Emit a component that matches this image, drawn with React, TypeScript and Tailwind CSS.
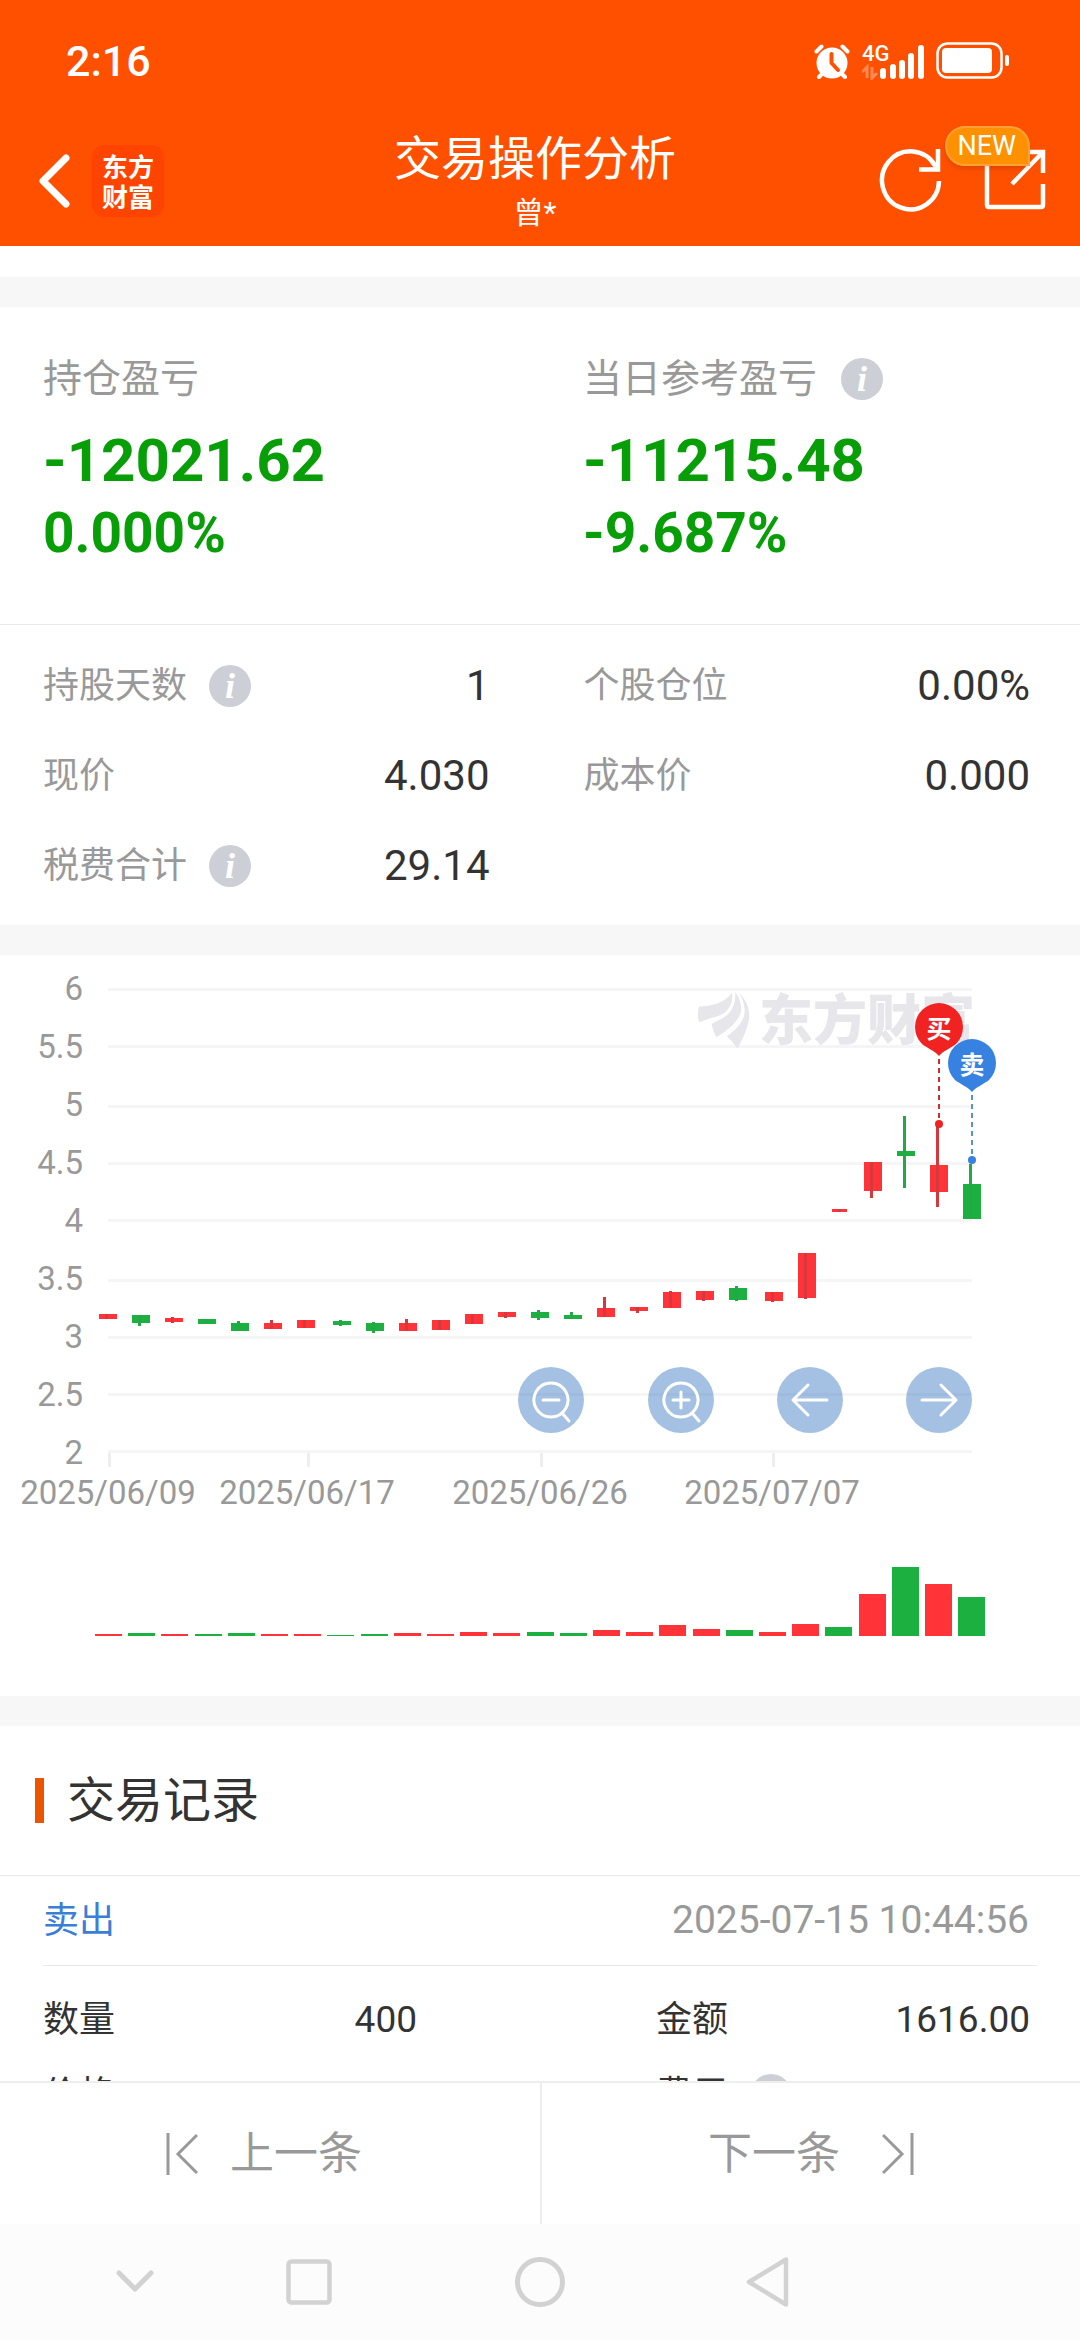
import React from 'react';

interface ICandle {
  x: number;
  up: boolean;
  top: number;
  bottom: number;
  high: number;
  low: number;
  volume: number;
}

interface FieldProps {
  label: string;
  value?: string;
  info?: boolean;
}

const RED = '#ff3338';
const GREEN = '#1bb040';

// x, up, body top, body bottom, high, low, volume (all in chart units)
const rawCandles: [number, boolean, number, number, number, number, number][] = [
  [99, true, 359, 364, 359, 364, 2],
  [132, false, 360, 368, 360, 371, 3],
  [165, true, 363, 367, 362, 368, 2],
  [198, false, 364, 369, 364, 369, 2],
  [231, false, 368, 376, 366, 376, 3],
  [264, true, 368, 374, 365, 374, 2],
  [297, true, 365, 373, 365, 373, 2],
  [333, false, 366, 370, 365, 371, 1],
  [366, false, 368, 376, 367, 378, 2],
  [399, true, 368, 376, 364, 376, 3],
  [432, true, 365, 375, 365, 375, 2],
  [465, true, 359, 369, 359, 369, 4],
  [498, true, 357, 362, 357, 363, 3],
  [531, false, 357, 363, 355, 365, 4],
  [564, false, 360, 364, 357, 364, 3],
  [597, true, 353, 362, 342, 362, 6],
  [630, true, 352, 356, 352, 358, 4],
  [663, true, 337, 353, 336, 353, 11],
  [696, true, 336, 345, 336, 346, 7],
  [729, false, 333, 345, 331, 346, 6],
  [765, true, 337, 346, 337, 347, 4],
  [798, true, 298, 343, 298, 344, 12],
  [832, true, 254, 257, 254, 257, 9],
  [864, true, 207, 236, 207, 243, 42],
  [897, false, 196, 201, 161, 233, 69],
  [930, true, 210, 237, 172, 252, 52],
  [963, false, 229, 264, 209, 264, 39],
];

const candles: ICandle[] = rawCandles.map(([x, up, top, bottom, high, low, volume]) => ({
  x, up, top, bottom, high, low, volume,
}));

// day that opened at the limit: flat candle, volume counted as selling
const LIMIT_DAY = 22;

const gridLines = [
  { label: '6', y: 33, base: 45 },
  { label: '5.5', y: 90, base: 103 },
  { label: '5', y: 150, base: 161 },
  { label: '4.5', y: 207, base: 219 },
  { label: '4', y: 264, base: 277 },
  { label: '3.5', y: 324, base: 335 },
  { label: '3', y: 381, base: 393 },
  { label: '2.5', y: 438, base: 451 },
  { label: '2', y: 495, base: 509 },
];

const dates = [
  { label: '2025/06/09', x: 108 },
  { label: '2025/06/17', x: 307 },
  { label: '2025/06/26', x: 540 },
  { label: '2025/07/07', x: 772 },
];

function InfoButton() {
  return (
    <button
      aria-label="说明"
      className="flex h-[42px] w-[42px] shrink-0 items-center justify-center rounded-full bg-[#ccd0d6] font-['Liberation_Serif',serif] text-4xl leading-none font-bold text-white italic"
    >
      i
    </button>
  );
}

function StatusBar() {
  return (
    <div className="flex h-[116px] items-center justify-between pt-1.5 pr-[70px] pl-[66px] text-white">
      <span className="text-[43px] leading-none font-medium">2:16</span>
      <div className="flex items-center gap-3">
        <svg width="36" height="36" viewBox="0 0 36 36" aria-label="闹钟">
          <circle cx="18" cy="20" r="15.5" fill="#fff" />
          <path d="M2.5 8.5 7.5 3.5M33.5 8.5 28.5 3.5M9 30 5 34M27 30 31 34" stroke="#fff" strokeWidth="4" strokeLinecap="round" />
          <path d="M17.5 11V20L24 27" fill="none" stroke="#ff5000" strokeWidth="4" strokeLinecap="round" strokeLinejoin="round" />
        </svg>
        <svg width="62" height="38" viewBox="0 0 62 38" aria-label="信号">
          <text x="0" y="19" fill="#fff" fontSize="22" fontWeight="500">4G</text>
          <path d="M0 30 5 25V36M15 31 10 36V25" fill="none" stroke="#ff8a55" strokeWidth="3" />
          <g fill="#fff">
            <rect x="18" y="26" width="6" height="11" rx="3" />
            <rect x="28" y="22" width="6" height="15" rx="3" />
            <rect x="37" y="18" width="6" height="19" rx="3" />
            <rect x="46" y="11" width="6" height="26" rx="3" />
            <rect x="56" y="3" width="6" height="34" rx="3" />
          </g>
        </svg>
        <svg width="74" height="38" viewBox="0 0 74 38" aria-label="电量">
          <rect x="1.5" y="1.5" width="64" height="34" rx="10" fill="none" stroke="#fff" strokeWidth="2.5" />
          <rect x="6" y="6" width="50" height="25" rx="4" fill="#fff" />
          <rect x="69" y="13" width="4" height="11" rx="2" fill="#fff" />
        </svg>
      </div>
    </div>
  );
}

function Header() {
  return (
    <header className="shrink-0 bg-[#ff5000] text-white">
      <StatusBar />
      <div className="flex h-[130px] items-center">
        <div className="flex flex-1 items-center gap-5 pl-9">
          <button aria-label="返回">
            <svg width="36" height="60" viewBox="0 0 36 60">
              <path d="M30 7 7 30 30 53" fill="none" stroke="#fff" strokeWidth="7" strokeLinecap="round" strokeLinejoin="round" />
            </svg>
          </button>
          <a
            href="#home"
            className="flex h-[72px] w-[72px] flex-col items-center justify-center rounded-xl bg-[#ff4400] font-['Noto_Sans_CJK_SC',sans-serif] text-[26px] leading-[30px] font-bold"
          >
            <span>东方</span>
            <span>财富</span>
          </a>
        </div>
        <div className="pt-1 text-center">
          <h1 className="text-[47px] leading-14">交易操作分析</h1>
          <p className="mt-1 text-[30px] leading-11">曾*</p>
        </div>
        <div className="flex flex-1 items-center justify-end gap-10 pr-[30px] pl-4">
          <button aria-label="刷新">
            <svg width="66" height="66" viewBox="0 0 66 66">
              <path d="M61 33A28.5 29 0 1 1 57 17.5L60 21" fill="none" stroke="#fff" strokeWidth="4.5" />
              <path d="M60 1V21.5H41" fill="none" stroke="#fff" strokeWidth="4.5" />
            </svg>
          </button>
          <button aria-label="分享" className="relative">
            <svg width="66" height="66" viewBox="0 0 66 66">
              <path d="M30 4H59V25M59 36V57Q59 59 57 59H5Q3 59 3 57V4" fill="none" stroke="#fff" strokeWidth="4.5" />
              <path d="M58 5 28 36" stroke="#fff" strokeWidth="4.5" />
            </svg>
            <span className="absolute -top-[22px] right-5 flex h-10 items-center rounded-full rounded-br-none border-2 border-[#ffa233] bg-[#ff9000] pr-3 pl-2.5 text-[27px] leading-none shadow-md">
              NEW
            </span>
          </button>
        </div>
      </div>
    </header>
  );
}

function Summary({ label, amount, percent, info }: { label: string; amount: string; percent: string; info?: boolean }) {
  return (
    <div className="flex-1">
      <div className="flex h-14 items-center gap-6 text-[39px] text-[#999]">
        {label}
        {info && <InfoButton />}
      </div>
      <p className="mt-4 text-[60px] leading-[76px] font-bold text-[#089e08]">{amount}</p>
      <p className="text-[55px] leading-[68px] font-bold text-[#089e08]">{percent}</p>
    </div>
  );
}

function Detail({ label, value, info }: FieldProps) {
  return (
    <div className="flex h-[90px] items-center justify-between">
      <dt className="flex items-center gap-[22px] text-4xl text-[#999]">
        {label}
        {info && <InfoButton />}
      </dt>
      <dd className="text-[42px] leading-none text-[#333]">{value}</dd>
    </div>
  );
}

function RecordField({ label, value, info }: FieldProps) {
  return (
    <div className="flex h-[75px] items-center justify-between text-[#333]">
      <dt className="flex items-center gap-[22px] text-4xl">
        {label}
        {info && <InfoButton />}
      </dt>
      <dd className="text-[37px] leading-none">{value}</dd>
    </div>
  );
}

function Pin({ x, y, color, line, text }: { x: number; y: number; color: string; line: string; text: string }) {
  return (
    <g transform={`translate(${x} ${y})`}>
      <path d="M0 30V92" stroke={line} strokeWidth="2" strokeDasharray="5 4" />
      <circle cx="0" cy="95" r="4" fill={color} />
      <path d="M0 27C-4 22-12 19-17 15A24 24 0 1 1 17 15C12 19 4 22 0 27Z" fill={color} />
      <text x="0" y="9" textAnchor="middle" fontSize="25" fontWeight="700" fill="#fff">{text}</text>
    </g>
  );
}

function Chart() {
  return (
    <svg viewBox="0 0 1080 741" className="block w-full">
      {gridLines.map((g) => (
        <g key={g.label}>
          <rect x="108" y={g.y} width="864" height="3" fill="#f5f5f5" />
          <text x="83" y={g.base} textAnchor="end" fontSize="33" fill="#999">{g.label}</text>
        </g>
      ))}
      {dates.map((d) => (
        <g key={d.label}>
          <rect x={d.x} y="498" width="3" height="14" fill="#eee" />
          <text x={d.x} y="549" textAnchor="middle" fontSize="33" fill="#999">{d.label}</text>
        </g>
      ))}

      {/* watermark */}
      <g fill="#e6e6eb">
        <g transform="translate(640 5) scale(0.333)">
          <path d="M174 165Q173 148 178 140C215 138 250 130 277 99C280 135 262 158 235 168Q205 176 178 187Q174 178 174 165Z" />
          <path d="M285 95C291 130 274 165 240 179Q226 186 215 192Q219 214 229 232C262 212 303 180 304 148Q303 118 285 95Z" />
          <path d="M298 99C325 125 333 160 325 190Q314 230 292 266Q280 246 261 229C295 205 318 178 314 146Q311 120 298 99Z" />
        </g>
        <text x="759" y="85" fontSize="54" fontWeight="900">东方财富</text>
      </g>

      {candles.map((c, i) => (
        <g key={c.x}>
          <rect x={c.x} y={c.top} width={i === LIMIT_DAY ? 15 : 18} height={c.bottom - c.top} fill={c.up ? RED : GREEN} />
          <rect x={c.x + 6} y={c.high} width="3" height={c.low - c.high} fill={c.up ? '#d5393d' : '#22a845'} />
          <rect
            x={95 + Math.round(i * 33.2)}
            y={681 - c.volume}
            width="27"
            height={c.volume}
            fill={c.up && i !== LIMIT_DAY ? RED : GREEN}
          />
        </g>
      ))}

      <Pin x={939} y={74} color="#f02222" line="#c93030" text="买" />
      <Pin x={972} y={110} color="#3782e0" line="#5590d8" text="卖" />
    </svg>
  );
}

const chartButtons = [
  { label: '缩小', d: 'M33 16A17 17 0 1 1 32.9 16ZM44 46 51 54M25 33H41' },
  { label: '放大', d: 'M33 16A17 17 0 1 1 32.9 16ZM44 46 51 54M25 33H41M33 25V41' },
  { label: '左移', d: 'M50 33H16M31 18 16 33 31 48' },
  { label: '右移', d: 'M16 33H50M35 18 50 33 35 48' },
];

export default function App() {
  return (
    <div className="flex h-screen flex-col overflow-hidden bg-white font-[Roboto,'Noto_Sans_CJK_SC',sans-serif]">
      <Header />

      <main className="min-h-0 flex-1 overflow-hidden pt-[31px]">
        <section className="border-t-[30px] border-[#f7f7f7]">
          <div className="flex border-b border-[#e8e8e8] px-[43px] pt-11 pb-[57px]">
            <Summary label="持仓盈亏" amount="-12021.62" percent="0.000%" />
            <div className="w-[86px]" />
            <Summary label="当日参考盈亏" amount="-11215.48" percent="-9.687%" info />
          </div>
          <dl className="grid grid-cols-2 gap-x-[94px] pt-4 pr-[50px] pb-[14px] pl-[43px]">
            <Detail label="持股天数" value="1" info />
            <Detail label="个股仓位" value="0.00%" />
            <Detail label="现价" value="4.030" />
            <Detail label="成本价" value="0.000" />
            <Detail label="税费合计" value="29.14" info />
          </dl>
        </section>

        <section className="relative border-t-[30px] border-[#f7f7f7]">
          <Chart />
          <div className="absolute top-5/9 right-1/10 flex w-[42%] justify-between">
            {chartButtons.map((b) => (
              <button key={b.label} aria-label={b.label} className="h-[66px] w-[66px] rounded-full bg-[#3575c1]/45">
                <svg width="66" height="66" viewBox="0 0 66 66">
                  <path d={b.d} fill="none" stroke="#fff" strokeWidth="3" strokeLinecap="round" strokeLinejoin="round" />
                </svg>
              </button>
            ))}
          </div>
        </section>

        <section className="border-t-[30px] border-[#f7f7f7]">
          <div className="flex h-[150px] items-center gap-[23px] border-b border-[#e8e8e8] pl-[35px]">
            <span className="h-[45px] w-[9px] bg-[#eb5500]" />
            <h2 className="text-5xl text-[#333]">交易记录</h2>
          </div>
          <div className="mx-[43px] flex h-[90px] items-center justify-between border-b border-[#e8e8e8] pr-2">
            <span className="text-4xl text-[#3a7fd5]">卖出</span>
            <time className="text-[39px] leading-none text-[#999]">2025-07-15 10:44:56</time>
          </div>
          <dl className="grid grid-cols-2 gap-x-[239px] pt-4 pr-[50px] pl-[43px]">
            <RecordField label="数量" value="400" />
            <RecordField label="金额" value="1616.00" />
            <RecordField label="价格" />
            <RecordField label="费用" info />
          </dl>
        </section>
      </main>

      <div className="grid h-[143px] shrink-0 grid-cols-2 border-t-2 border-[#eee] bg-white text-[44px] text-[#999]">
        <button className="flex items-center justify-center gap-8 pr-3">
          <svg width="32" height="44" viewBox="0 0 32 44" fill="none" stroke="#999" strokeWidth="3">
            <path d="M2 1V43M31 3 12 22 31 41" />
          </svg>
          上一条
        </button>
        <button className="flex items-center justify-center gap-[42px] border-l-2 border-[#eee]">
          下一条
          <svg width="32" height="44" viewBox="0 0 32 44" fill="none" stroke="#999" strokeWidth="3">
            <path d="M30 1V43M1 3 20 22 1 41" />
          </svg>
        </button>
      </div>

      <nav className="grid h-[116px] shrink-0 grid-cols-[45fr_13fr_64fr_12fr_46fr] items-center justify-items-center bg-[#fcfcfc]">
        <button aria-label="收起">
          <svg width="40" height="28" viewBox="0 0 40 28">
            <path d="M4 5 20 21 36 5" fill="none" stroke="#d2d2d2" strokeWidth="5" strokeLinecap="round" strokeLinejoin="round" />
          </svg>
        </button>
        <button aria-label="最近任务">
          <svg width="46" height="46" viewBox="0 0 46 46">
            <rect x="2.5" y="2.5" width="41" height="41" rx="3" fill="none" stroke="#d2d2d2" strokeWidth="4.5" />
          </svg>
        </button>
        <button aria-label="主屏幕">
          <svg width="50" height="50" viewBox="0 0 50 50">
            <circle cx="25" cy="25" r="22.5" fill="none" stroke="#d2d2d2" strokeWidth="5" />
          </svg>
        </button>
        <button aria-label="返回上一页">
          <svg width="44" height="50" viewBox="0 0 44 50">
            <path d="M3 25 40 2.5V47.5Z" fill="none" stroke="#d2d2d2" strokeWidth="4.5" strokeLinejoin="round" />
          </svg>
        </button>
      </nav>
    </div>
  );
}
